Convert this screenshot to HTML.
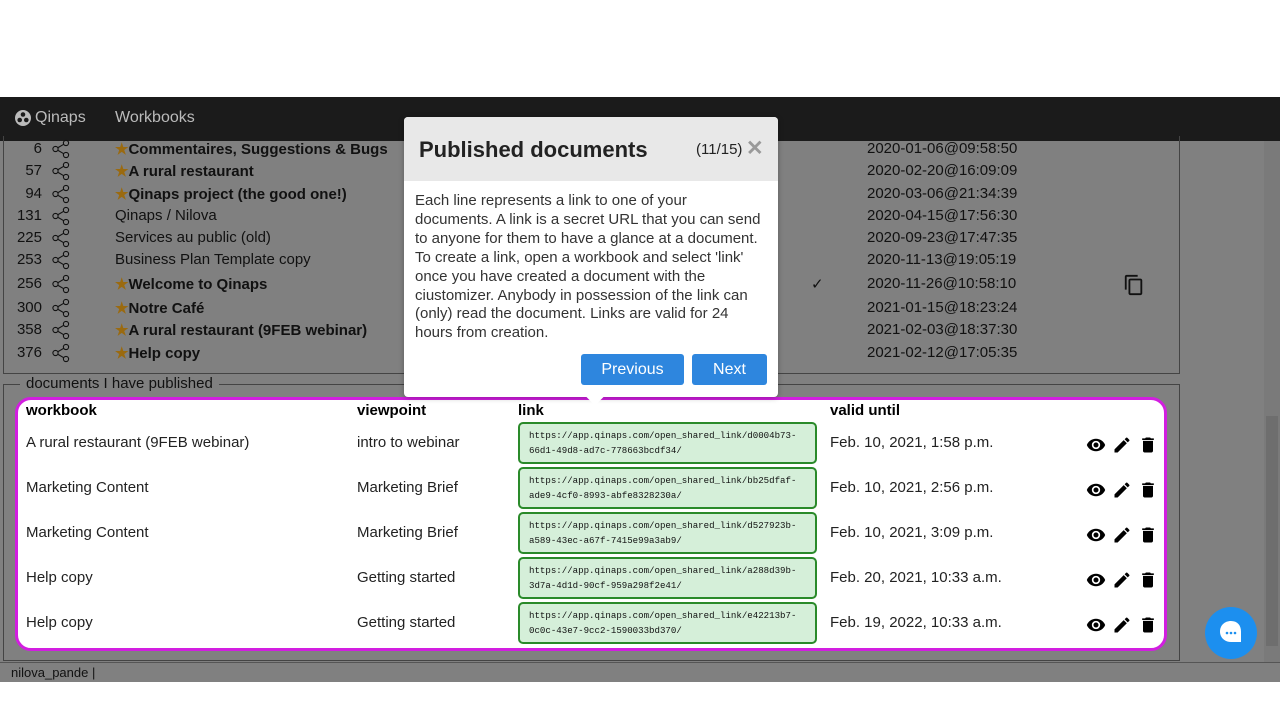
<!DOCTYPE html>
<html><head><meta charset="utf-8"><style>
*{margin:0;padding:0;box-sizing:border-box}
html,body{background:#808080}
body{width:1280px;height:720px;position:relative;overflow:hidden;font-family:"Liberation Sans",Arial,sans-serif;}
.a{position:absolute;white-space:nowrap}
.t{font-size:15px;color:#111}
.num{font-size:15px;color:#111;text-align:right;width:42px;left:0}
.b{font-weight:bold}
.star{color:#9a6a10}
.lk{left:518px;width:299px;height:42px;background:#d5efd9;border:2px solid #2a8a2a;border-radius:5px;font-family:"Liberation Mono",monospace;font-size:9.1px;line-height:15px;padding:4px 0 0 9px;color:#111;white-space:pre}
.bt{background:#2e86de;color:#fff;font-size:16px;text-align:center;line-height:31px;border-radius:3px;top:354px;height:31px}
</style></head><body>
<svg class="a" style="left:0;top:0" width="1280" height="720"><rect x="0" y="0" width="1280" height="97" fill="#ffffff"/><rect x="0" y="97" width="1280" height="44" fill="#1b1b1b"/><rect x="0" y="141" width="1280" height="541" fill="#808080"/><rect x="0" y="682" width="1280" height="38" fill="#ffffff"/></svg>
<div class="a" style="left:3px;top:136px;width:1177px;height:238px;border:1px solid #444;border-top:none"></div>
<div class="a" style="left:3px;top:384px;width:1177px;height:277px;border:1px solid #444"></div>
<div class="a" style="left:20px;top:375px;background:#808080;padding:0 6px;font-size:15px;color:#111">documents I have published</div>
<div class="a" style="left:1264px;top:141px;width:16px;height:521px;background:#7a7a7a"></div>
<div class="a" style="left:1266px;top:416px;width:12px;height:230px;background:#6e6e6e"></div>
<div class="a" style="left:0;top:662px;width:1280px;height:20px;border-top:1px solid #555;background:#808080"></div>
<div class="a" style="left:11px;top:665px;font-size:13px;color:#111">nilova_pande |</div>
<svg class="a" style="left:14px;top:109px" width="18" height="18" viewBox="0 0 18 18"><circle cx="9" cy="9" r="8" fill="#bbb"/><circle cx="9" cy="5.5" r="2.3" fill="#1b1b1b"/><circle cx="5.7" cy="11" r="2.3" fill="#1b1b1b"/><circle cx="12.3" cy="11" r="2.3" fill="#1b1b1b"/></svg>
<div class="a" style="left:35px;top:109px;font-size:16px;color:#bbb">Qinaps</div>
<div class="a" style="left:115px;top:109px;font-size:16px;color:#bbb">Workbooks</div>
<div id="rows"></div>
<script>
var r=[["6","Commentaires, Suggestions & Bugs",1,"2020-01-06@09:58:50",140],["57","A rural restaurant",1,"2020-02-20@16:09:09",162],["94","Qinaps project (the good one!)",1,"2020-03-06@21:34:39",185],["131","Qinaps / Nilova",0,"2020-04-15@17:56:30",207],["225","Services au public (old)",0,"2020-09-23@17:47:35",229],["253","Business Plan Template copy",0,"2020-11-13@19:05:19",251],["256","Welcome to Qinaps",1,"2020-11-26@10:58:10",275],["300","Notre Café",1,"2021-01-15@18:23:24",299],["358","A rural restaurant (9FEB webinar)",1,"2021-02-03@18:37:30",321],["376","Help copy",1,"2021-02-12@17:05:35",344]];
var h="";
r.forEach(function(x){var y=x[4];
h+='<div class="a num" style="top:'+y+'px">'+x[0]+'</div>';
h+='<svg class="a" style="left:51px;top:'+(y-1)+'px" width="20" height="20" viewBox="0 0 20 20" fill="none" stroke="#111" stroke-width="1.1"><circle cx="15" cy="4" r="2.6"/><circle cx="4.5" cy="10" r="2.6"/><circle cx="15" cy="16" r="2.6"/><path d="M7 8.6L12.7 5.3M7 11.4L12.7 14.7"/></svg>';
h+='<div class="a t'+(x[2]?' b':'')+'" style="left:115px;top:'+y+'px">'+(x[2]?'<span class="star">★</span>':'')+x[1]+'</div>';
h+='<div class="a t" style="left:867px;top:'+y+'px">'+x[3]+'</div>';});
document.getElementById('rows').innerHTML=h;
</script>
<div class="a t" style="left:811px;top:275px">✓</div>
<svg class="a" style="left:1123px;top:274px" width="22" height="22" viewBox="0 0 24 24"><path fill="#111" d="M16 1H4c-1.1 0-2 .9-2 2v14h2V3h12V1zm3 4H8c-1.1 0-2 .9-2 2v14c0 1.1.9 2 2 2h11c1.1 0 2-.9 2-2V7c0-1.1-.9-2-2-2zm0 16H8V7h11v14z"/></svg>
<div class="a" style="left:15px;top:397px;width:1152px;height:254px;background:#fff;border:3px solid #d21ee0;border-radius:16px"></div>
<div class="a b" style="left:26px;top:402px;font-size:15px;color:#000">workbook</div>
<div class="a b" style="left:357px;top:402px;font-size:15px;color:#000">viewpoint</div>
<div class="a b" style="left:518px;top:402px;font-size:15px;color:#000">link</div>
<div class="a b" style="left:830px;top:402px;font-size:15px;color:#000">valid until</div>
<div id="tr"></div>
<script>
var d=[["A rural restaurant (9FEB webinar)","intro to webinar","https://app.qinaps.com/open_shared_link/d0004b73-\n66d1-49d8-ad7c-778663bcdf34/","Feb. 10, 2021, 1:58 p.m."],["Marketing Content","Marketing Brief","https://app.qinaps.com/open_shared_link/bb25dfaf-\nade9-4cf0-8993-abfe8328230a/","Feb. 10, 2021, 2:56 p.m."],["Marketing Content","Marketing Brief","https://app.qinaps.com/open_shared_link/d527923b-\na589-43ec-a67f-7415e99a3ab9/","Feb. 10, 2021, 3:09 p.m."],["Help copy","Getting started","https://app.qinaps.com/open_shared_link/a288d39b-\n3d7a-4d1d-90cf-959a298f2e41/","Feb. 20, 2021, 10:33 a.m."],["Help copy","Getting started","https://app.qinaps.com/open_shared_link/e42213b7-\n0c0c-43e7-9cc2-1590033bd370/","Feb. 19, 2022, 10:33 a.m."]];
var g="";
d.forEach(function(x,i){var y=434+45*i;
g+='<div class="a" style="left:26px;top:'+y+'px;font-size:15px;color:#222">'+x[0]+'</div>';
g+='<div class="a" style="left:357px;top:'+y+'px;font-size:15px;color:#222">'+x[1]+'</div>';
g+='<div class="a lk" style="top:'+(y-12)+'px">'+x[2]+'</div>';
g+='<div class="a" style="left:830px;top:'+y+'px;font-size:15px;color:#222">'+x[3]+'</div>';
var iy=y+1;
g+='<svg class="a" style="left:1085px;top:'+iy+'px" width="22" height="20" viewBox="0 0 24 24"><path fill="#000" d="M12 4.5C7 4.5 2.7 7.6 1 12c1.7 4.4 6 7.5 11 7.5s9.3-3.1 11-7.5c-1.7-4.4-6-7.5-11-7.5zM12 17a5 5 0 110-10 5 5 0 010 10zm0-8a3 3 0 100 6 3 3 0 000-6z"/></svg>';
g+='<svg class="a" style="left:1112px;top:'+iy+'px" width="20" height="20" viewBox="0 0 24 24"><path fill="#000" d="M3 17.25V21h3.75L17.8 9.94l-3.75-3.75L3 17.25zM20.7 7.04a1 1 0 000-1.41l-2.34-2.34a1 1 0 00-1.410 0l-1.83 1.83 3.75 3.75 1.830-1.83z"/></svg>';
g+='<svg class="a" style="left:1138px;top:'+iy+'px" width="20" height="20" viewBox="0 0 24 24"><path fill="#000" d="M6 19c0 1.1.9 2 2 2h8c1.1 0 2-.9 2-2V7H6v12zM19 4h-3.5l-1-1h-5l-1 1H5v2h14V4z"/></svg>';});
document.getElementById('tr').innerHTML=g;
</script>
<div class="a" style="left:404px;top:117px;width:374px;height:280px;background:#fff;border-radius:4px;box-shadow:0 1px 6px rgba(0,0,0,.3);overflow:hidden">
<div style="height:64px;background:#e8e8e8"></div>
</div>
<div class="a" style="left:589px;top:391px;width:12px;height:12px;background:#fff;transform:rotate(45deg)"></div>
<div class="a b" style="left:419px;top:137px;font-size:22px;color:#222">Published documents</div>
<div class="a" style="left:696px;top:141px;font-size:15px;color:#222">(11/15)</div>
<div class="a b" style="left:746px;top:136px;font-size:21px;color:#999">✕</div>
<div class="a" style="left:415px;top:192px;width:350px;white-space:normal;font-size:15px;line-height:18.9px;color:#333">Each line represents a link to one of your documents. A link is a secret URL that you can send to anyone for them to have a glance at a document. To create a link, open a workbook and select 'link' once you have created a document with the ciustomizer. Anybody in possession of the link can (only) read the document. Links are valid for 24 hours from creation.</div>
<div class="a bt" style="left:581px;width:103px">Previous</div>
<div class="a bt" style="left:692px;width:75px">Next</div>
<div class="a" style="left:1205px;top:607px;width:52px;height:52px;border-radius:50%;background:#1c8fef"></div>
<svg class="a" style="left:1219px;top:620px" width="24" height="26" viewBox="0 0 24 26"><path fill="#fff" d="M12 1C5.5 1 1 5.5 1 11.5S5.5 22 12 22h10V11.5C22 5.5 18.5 1 12 1z"/><circle cx="8" cy="13" r="1.3" fill="#1c8fef"/><circle cx="12" cy="13" r="1.3" fill="#1c8fef"/><circle cx="16" cy="13" r="1.3" fill="#1c8fef"/></svg>
</body></html>
